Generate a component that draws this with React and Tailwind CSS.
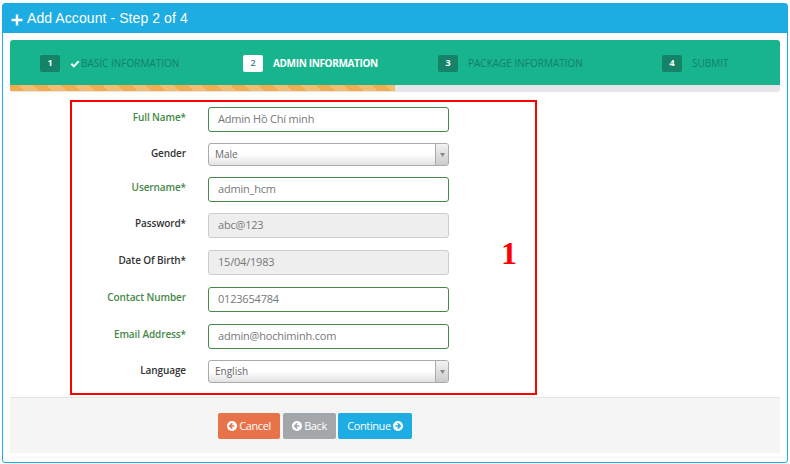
import React from "react";

function CircleArrow({ dir = "left", className = "" }) {
  return (
    <svg viewBox="0 0 16 16" className={className} width="10" height="10">
      <circle cx="8" cy="8" r="8" fill="currentColor" />
      {dir === "left" ? (
        <path d="M8.5 3.6 4.2 8l4.3 4.4M4.8 8h7" fill="none" stroke="var(--ic)" strokeWidth="2.4" />
      ) : (
        <path d="M7.5 3.6 11.8 8l-4.3 4.4M11.2 8h-7" fill="none" stroke="var(--ic)" strokeWidth="2.4" />
      )}
    </svg>
  );
}

function Step({ n, label, active, done, className = "" }) {
  return (
    <div className={"flex items-center " + className}>
      <span
        className={
          "flex h-[17px] w-5 items-center justify-center rounded-[2px] text-[9px] " +
          (active ? "bg-white font-semibold text-[#4a7f90]" : "bg-[#148367] font-bold text-white")
        }
      >
        {n}
      </span>
      {done && (
        <svg viewBox="0 0 16 16" width="10" height="9" className="ml-[10px]">
          <path d="M1.5 8.5 6 13 14.5 4" fill="none" stroke="#fff" strokeWidth="3.4" />
        </svg>
      )}
      <span
        className={
          "text-[10px] uppercase " +
          (active
            ? "ml-[10px] font-bold tracking-[-0.35px] text-white"
            : (done ? "ml-[1px] " : "ml-[10px] ") + "text-[#13816a]")
        }
      >
        {label}
      </span>
    </div>
  );
}

function Field({ label, value, valid, disabled, className = "" }) {
  return (
    <div className={"flex items-center " + className}>
      <label
        className={
          "mb-[5px] w-[114px] shrink-0 text-right text-[10px] font-semibold tracking-[-0.1px] " +
          (valid ? "text-[#468847]" : "text-[#333]")
        }
      >
        {label}
      </label>
      <div
        className={
          "ml-[22px] flex h-[25px] w-[241px] items-center rounded-[3px] border px-[9px] pb-px text-[11px] tracking-[-0.2px] text-[#777] " +
          (disabled
            ? "border-[#cccccc] bg-[#eeeeee]"
            : "border-[#468847] bg-white")
        }
      >
        {value}
      </div>
    </div>
  );
}

function SelectField({ label, value, className = "" }) {
  return (
    <div className={"flex items-center " + className}>
      <label className="mb-[3px] w-[114px] shrink-0 text-right text-[10px] font-semibold tracking-[-0.1px] text-[#333]">
        {label}
      </label>
      <div className="ml-[22px] flex h-[23px] w-[241px] items-stretch overflow-hidden rounded-[3px] border border-[#aaaaaa] bg-gradient-to-b from-white via-white to-[#e2e2e2] text-[10px] text-[#666]">
        <span className="flex flex-1 items-center pl-[6px]">{value}</span>
        <span className="flex w-[13px] items-center justify-center border-l border-[#aaaaaa] bg-gradient-to-b from-[#f2f2f2] to-[#cccccc]">
          <svg width="5" height="4" viewBox="0 0 5 4">
            <path d="M0 0h5L2.5 4z" fill="#888" />
          </svg>
        </span>
      </div>
    </div>
  );
}

function Btn({ bg, ic, children }) {
  return (
    <button
      className={"flex h-[26px] items-center justify-center rounded-[2px] text-[11px] tracking-[-0.4px] text-white " + bg}
      style={{ "--ic": ic }}
    >
      {children}
    </button>
  );
}

export default function App() {
  return (
    <div className="h-[464px] w-[790px] bg-white pt-[3px] pl-[2px] font-['Open_Sans',sans-serif]">
      <div className="h-[460px] w-[786px] rounded-[3px] border border-[#1dade2] bg-white">
        <div className="flex h-[29px] items-center bg-[#1dade2] pl-[8px] font-['Liberation_Sans',sans-serif] text-[14px] tracking-[0.08px] text-white">
          <svg viewBox="0 0 12 12" width="12" height="12" className="mr-[4px] mt-[3px]">
            <path d="M6 .5v11M.5 6h11" stroke="#fff" strokeWidth="2.4" fill="none" />
          </svg>
          Add Account - Step 2 of 4
        </div>

        <div className="mx-[7px] mt-[7px] overflow-hidden rounded-[3px]">
          <div className="flex h-[45px] items-center bg-[#17b48d] pt-px">
            <Step n="1" label="Basic Information" done className="ml-[30px] w-[203px]" />
            <Step n="2" label="Admin Information" active className="w-[195px]" />
            <Step n="3" label="Package Information" className="w-[224px]" />
            <Step n="4" label="Submit" />
          </div>
          <div className="h-[7px] bg-[#e5e5ea]">
            <div
              className="h-[6px] w-[385px]"
              style={{
                backgroundImage:
                  "repeating-linear-gradient(45deg,#f0ad4e 0 10px,#f3bd6f 10px 20px)",
              }}
            />
          </div>
        </div>

        <div className="ml-[67px] mt-[8px] flex h-[295px] w-[467px] flex-col gap-[11px] border-2 border-[#ff0000] pt-[5px] relative">
          <Field label="Full Name*" value="Admin Hồ Chí minh" valid />
          <SelectField label="Gender" value="Male" />
          <Field label="Username*" value="admin_hcm" valid />
          <Field label="Password*" value="abc@123" disabled />
          <Field label="Date Of Birth*" value="15/04/1983" disabled className="mt-px" />
          <Field label="Contact Number" value="0123654784" valid className="mt-px" />
          <Field label="Email Address*" value="admin@hochiminh.com" valid className="mt-px" />
          <SelectField label="Language" value="English" />
          <span className="absolute left-[429px] top-[135px] font-['Liberation_Serif',serif] text-[32px] font-bold leading-none text-[#ff0000]">
            1
          </span>
        </div>

        <div className="mx-[7px] mt-[2px] flex h-[56px] border-t border-[#e5e5e5] bg-[#f5f5f5] pl-[208px] pt-[15px]">
          <Btn bg="w-[62px] bg-[#e8734a]" ic="#e8734a">
            <CircleArrow dir="left" className="mr-[2px]" />
            Cancel
          </Btn>
          <div className="w-[3px]" />
          <Btn bg="w-[53px] bg-[#a4a7aa]" ic="#a4a7aa">
            <CircleArrow dir="left" className="mr-[2px]" />
            Back
          </Btn>
          <div className="w-[2px]" />
          <Btn bg="w-[74px] bg-[#1dade2]" ic="#1dade2">
            Continue
            <CircleArrow dir="right" className="ml-[2px]" />
          </Btn>
        </div>
      </div>
    </div>
  );
}
